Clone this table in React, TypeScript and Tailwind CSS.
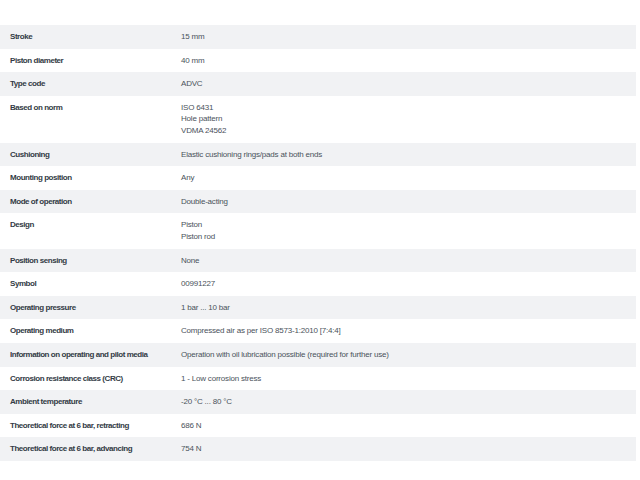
import React from 'react';

const specs: { label: string; value: string[] }[] = [
  { label: 'Stroke', value: ['15 mm'] },
  { label: 'Piston diameter', value: ['40 mm'] },
  { label: 'Type code', value: ['ADVC'] },
  { label: 'Based on norm', value: ['ISO 6431', 'Hole pattern', 'VDMA 24562'] },
  { label: 'Cushioning', value: ['Elastic cushioning rings/pads at both ends'] },
  { label: 'Mounting position', value: ['Any'] },
  { label: 'Mode of operation', value: ['Double-acting'] },
  { label: 'Design', value: ['Piston', 'Piston rod'] },
  { label: 'Position sensing', value: ['None'] },
  { label: 'Symbol', value: ['00991227'] },
  { label: 'Operating pressure', value: ['1 bar ... 10 bar'] },
  { label: 'Operating medium', value: ['Compressed air as per ISO 8573-1:2010 [7:4:4]'] },
  { label: 'Information on operating and pilot media', value: ['Operation with oil lubrication possible (required for further use)'] },
  { label: 'Corrosion resistance class (CRC)', value: ['1 - Low corrosion stress'] },
  { label: 'Ambient temperature', value: ['-20 °C ... 80 °C'] },
  { label: 'Theoretical force at 6 bar, retracting', value: ['686 N'] },
  { label: 'Theoretical force at 6 bar, advancing', value: ['754 N'] },
];

export default function App() {
  return (
    <div className="w-[640px] h-[480px] bg-white pt-[25px] pr-[4px] font-['Liberation_Sans',sans-serif] text-[8px] leading-[11.6px]">
      {specs.map((row, i) => (
        <div key={row.label} className={`flex py-[6px] ${i % 2 === 0 ? 'bg-[#f1f2f4]' : 'bg-white'}`}>
          <div className="w-[181px] shrink-0 pl-[10px] font-bold tracking-[-0.45px] text-[#333b45]">{row.label}</div>
          <div className="flex-1 tracking-[-0.2px] text-[#4a525b]">
            {row.value.map((v) => (
              <div key={v}>{v}</div>
            ))}
          </div>
        </div>
      ))}
    </div>
  );
}
